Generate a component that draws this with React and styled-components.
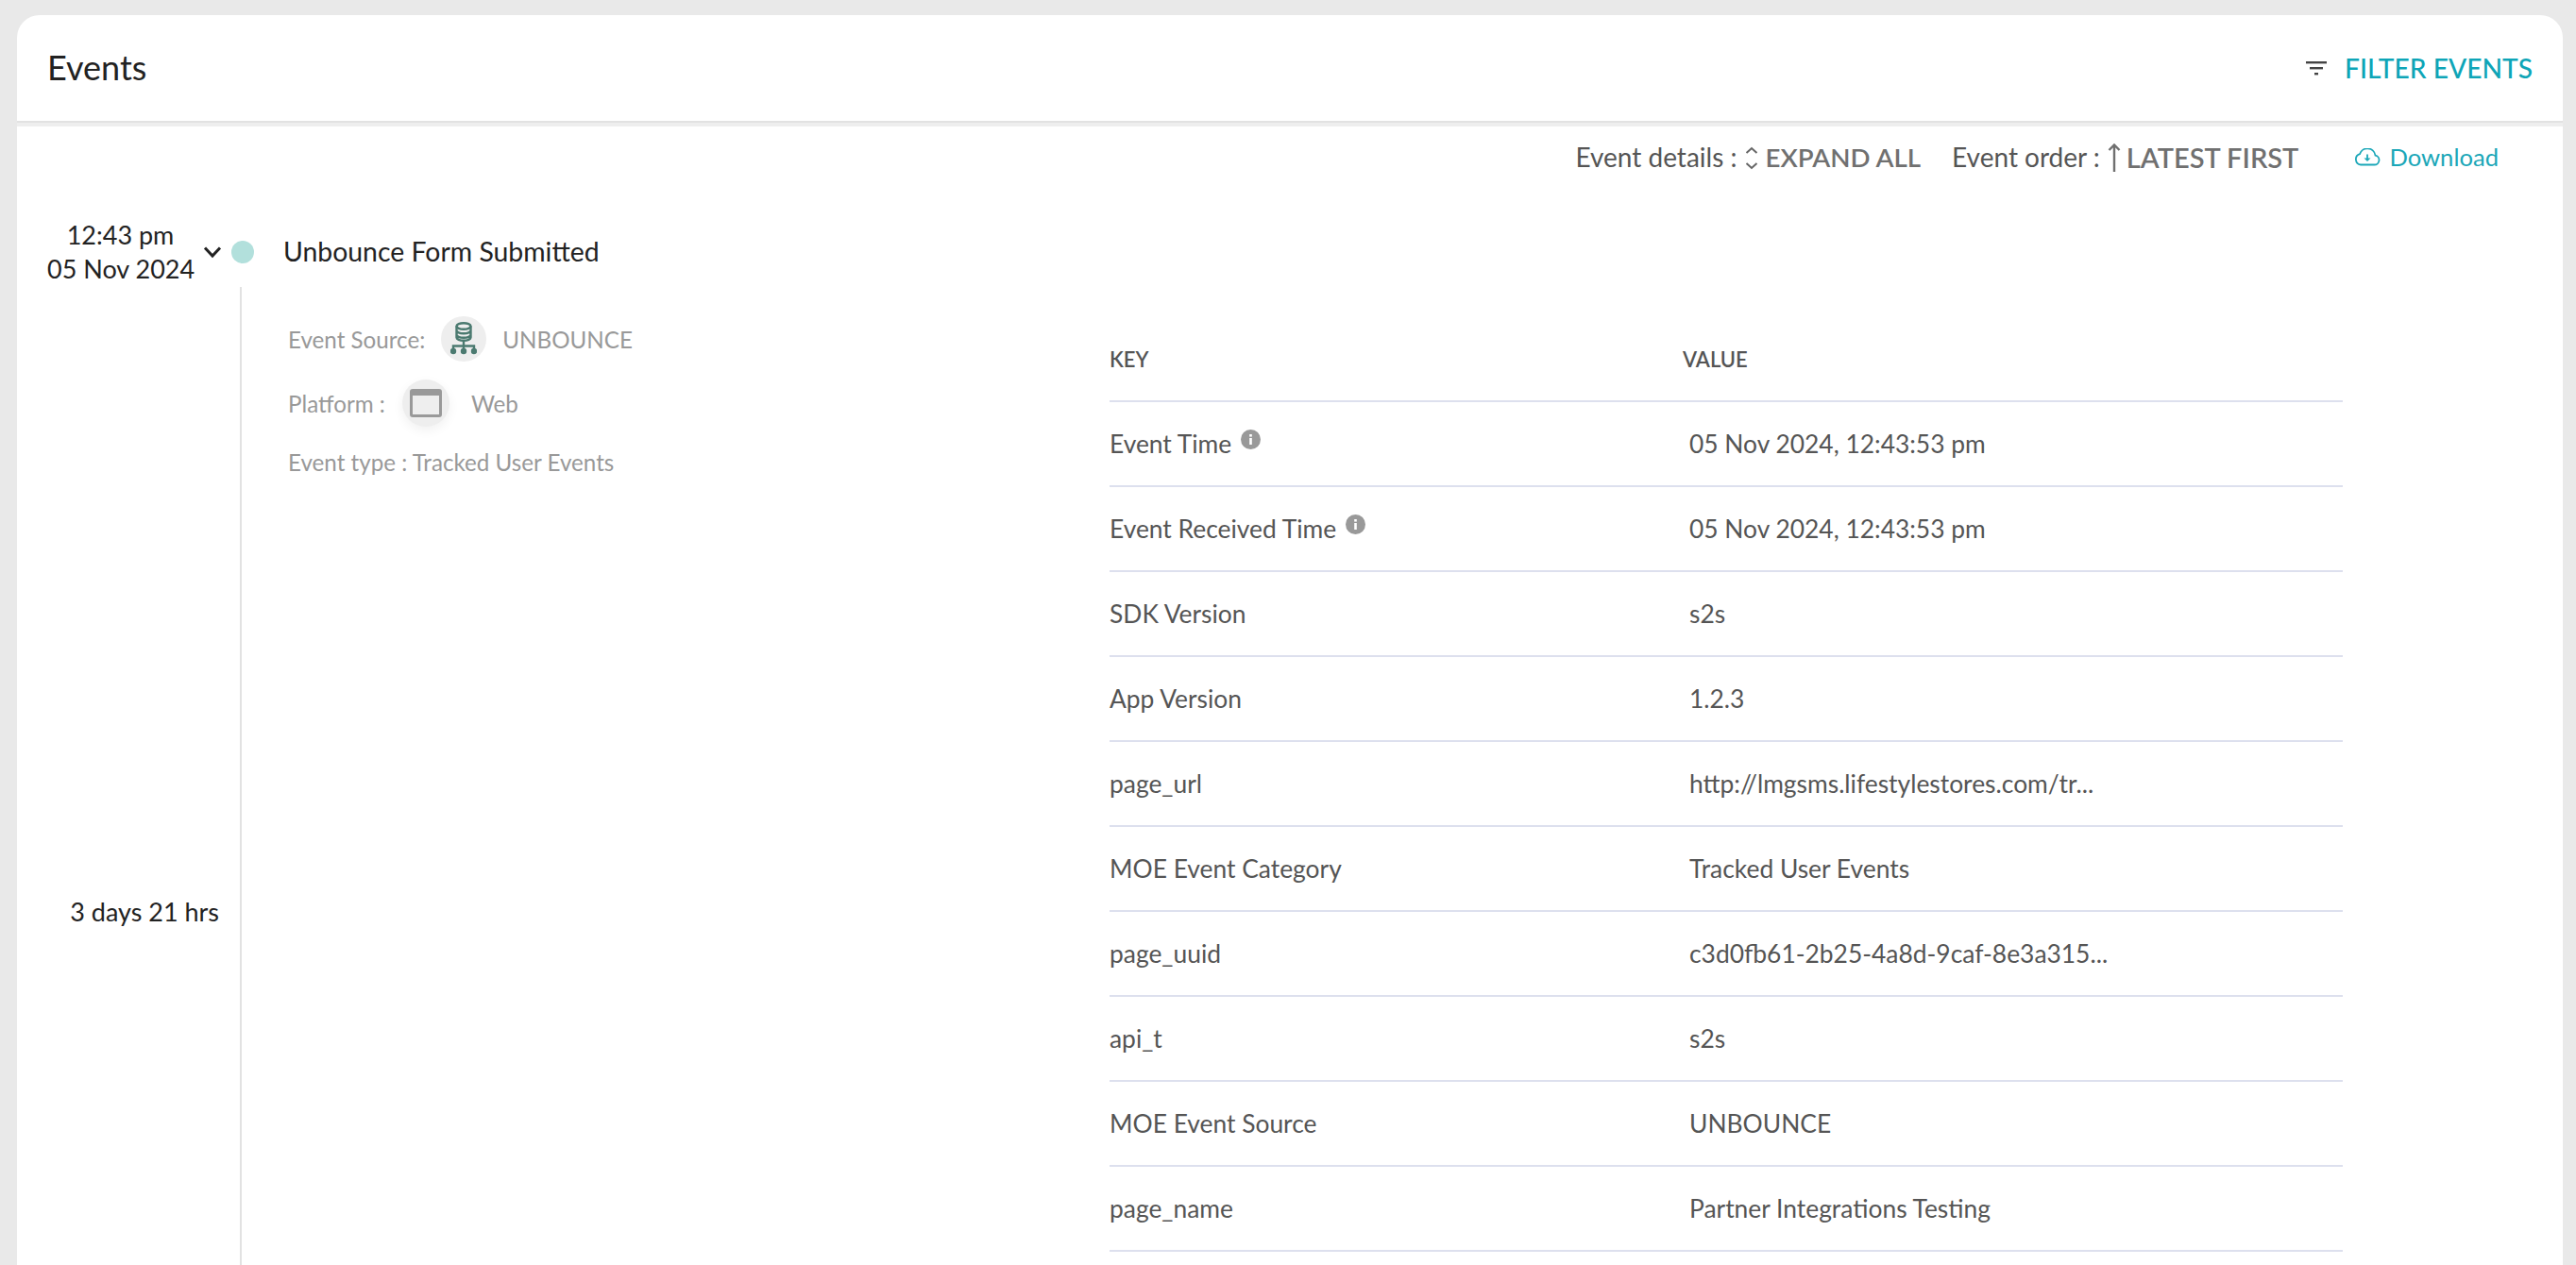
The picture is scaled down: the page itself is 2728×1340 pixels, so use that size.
import React from 'react';
import styled, { createGlobalStyle } from 'styled-components';

const GlobalStyle = createGlobalStyle`
  html, body { margin: 0; padding: 0; background: #e9e9e9; }
  body { font-family: "Lato", "Liberation Sans", sans-serif; }
  #root { height: 1340px; overflow: hidden; }
`;

const Page = styled.div`
  height: 1340px;
  padding: 16px 14px 0 18px;
  box-sizing: border-box;
  overflow: hidden;
`;
const Card = styled.div`
  background: #fff;
  border-radius: 24px 24px 0 0;
  height: 1324px;
  overflow: hidden;
`;
const Header = styled.header`
  height: 114px;
  box-sizing: border-box;
  border-bottom: 2px solid #e2e2e2;
  box-shadow: 0 4px 0 #eeeeee;
  padding: 0 32px;
  display: flex;
  align-items: center;
  justify-content: space-between;
`;
const Title = styled.h1`
  margin: 0;
  padding-bottom: 2px;
  font-size: 36px;
  font-weight: 400;
  color: #222;
`;
const FilterButton = styled.div`
  display: flex;
  align-items: center;
  gap: 18px;
  font-size: 28.200px;
  font-weight: 500;
  color: #0ea5b7;
`;
const Toolbar = styled.div`
  height: 64px;
  margin: 4px 0 33px;
  padding-right: 68px;
  display: flex;
  align-items: center;
  justify-content: flex-end;
  font-size: 28px;
  color: #555;
`;
const ToolGroup = styled.div`
  display: flex;
  align-items: center;
  margin-right: ${p => p.$gap}px;
`;
const ToolValue = styled.span`
  color: #707070;
  font-size: ${p => p.$size}px;
  font-weight: 600;
  margin-left: 6px;
`;
const Download = styled.div`
  display: flex;
  align-items: center;
  gap: 9px;
  color: #1ba7b8;
  font-size: 25.600px;
`;
const EventRow = styled.div`
  display: flex;
  align-items: center;
  height: 72px;
`;
const TimeCol = styled.div`
  width: 155px;
  margin-left: 32px;
  text-align: center;
  font-size: 27px;
  line-height: 36px;
  color: #222;
  white-space: nowrap;
`;
const Chevron = styled.div`
  width: 24px;
  margin-left: 8px;
  display: flex;
  justify-content: center;
`;
const Dot = styled.span`
  width: 24px;
  height: 24px;
  margin-left: 8px;
  border-radius: 50%;
  background: #b2e0dc;
`;
const EventName = styled.div`
  margin-left: 31px;
  padding-bottom: 2px;
  font-size: 28.400px;
  color: #222;
`;
const Body = styled.div`
  display: flex;
  height: 1100px;
`;
const GapCol = styled.div`
  width: 238px;
  box-sizing: border-box;
  border-right: 2px solid #e2e2e2;
  padding: 644px 22px 0 0;
  margin-top: 1px;
  text-align: right;
  font-size: 27px;
  line-height: 36px;
  color: #222;
`;
const Details = styled.div`
  width: 919px;
  box-sizing: border-box;
  padding: 32px 0 0 49px;
  font-size: 24.200px;
  color: #999;
`;
const DetailRow = styled.div`
  display: flex;
  align-items: center;
  margin-top: ${p => p.$top || 0}px;
`;
const IconCircle = styled.span`
  width: ${p => p.$size}px;
  height: ${p => p.$size}px;
  margin: 0 ${p => p.$right}px 0 ${p => p.$left}px;
  flex: none;
  border-radius: 50%;
  background: #eeeeee;
  display: flex;
  align-items: center;
  justify-content: center;
  box-shadow: ${p => (p.$shadow ? '0 4px 12px rgba(0,0,0,.06)' : 'none')};
`;
const Table = styled.div`
  width: 1306px;
  margin-top: 33px;
  display: flex;
  flex-direction: column;
`;
const Row = styled.div`
  height: 90px;
  box-sizing: border-box;
  border-bottom: 2px solid #dde0ee;
  display: grid;
  grid-template-columns: 607px 1fr;
  align-items: center;
`;
const HeadCell = styled.div`
  font-size: 22px;
  font-weight: 600;
  color: #555;
`;
const KeyCell = styled.div`
  display: flex;
  align-items: flex-start;
  gap: 10px;
  font-size: 26.400px;
  color: #555;
`;
const ValueCell = styled.div`
  padding-left: 7px;
  font-size: 26.400px;
  color: #555;
`;
const InfoIcon = styled.svg`
  width: 21px;
  height: 21px;
  margin-top: 1px;
`;

const Info = () => (
  <InfoIcon viewBox="0 0 21 21">
    <circle cx="10.5" cy="10.5" r="10.5" fill="#999" />
    <rect x="9.2" y="9" width="2.6" height="7" fill="#fff" />
    <rect x="9.2" y="5" width="2.6" height="2.6" fill="#fff" />
  </InfoIcon>
);

const rows = [
  ['Event Time', '05 Nov 2024, 12:43:53 pm', true],
  ['Event Received Time', '05 Nov 2024, 12:43:53 pm', true],
  ['SDK Version', 's2s'],
  ['App Version', '1.2.3'],
  ['page_url', 'http://lmgsms.lifestylestores.com/tr...'],
  ['MOE Event Category', 'Tracked User Events'],
  ['page_uuid', 'c3d0fb61-2b25-4a8d-9caf-8e3a315...'],
  ['api_t', 's2s'],
  ['MOE Event Source', 'UNBOUNCE'],
  ['page_name', 'Partner Integrations Testing'],
];

export default function App() {
  return (
    <>
      <GlobalStyle />
      <Page>
        <Card>
          <Header>
            <Title>Events</Title>
            <FilterButton>
              <svg width="24" height="24" viewBox="0 0 24 24" fill="#444">
                <rect x="1" y="5" width="22" height="2.4" />
                <rect x="5" y="11" width="14" height="2.4" />
                <rect x="10" y="17" width="4" height="2.4" />
              </svg>
              FILTER EVENTS
            </FilterButton>
          </Header>
          <Toolbar>
            <ToolGroup $gap={33}>
              Event details :
              <svg width="16" height="34" viewBox="0 0 16 34" fill="none" stroke="#666" strokeWidth="2" style={{ marginLeft: 8 }}>
                <path d="M2.500 13 8 8l5.500 5M2.500 24 8 29l5.500-5" />
              </svg>
              <ToolValue $size={27.7}>EXPAND ALL</ToolValue>
            </ToolGroup>
            <ToolGroup $gap={59}>
              Event order :
              <svg width="14" height="34" viewBox="0 0 14 34" fill="none" stroke="#707070" strokeWidth="2.400" style={{ marginLeft: 8 }}>
                <path d="M7 33V5M1.500 10 7 4.500 12.500 10" />
              </svg>
              <ToolValue $size={29}>LATEST FIRST</ToolValue>
            </ToolGroup>
            <Download>
              <svg width="28" height="19" viewBox="0 0 28 19" fill="none" stroke="#1ba7b8" strokeWidth="1.800">
                <path d="M7 17.500H21.500a5 5 0 0 0 1-9.900A8.500 8.500 0 0 0 6 6.200 5.800 5.800 0 0 0 7 17.500Z" />
                <path d="M14 6.500V11" />
                <path d="M10.500 10.500h7L14 14Z" fill="#1ba7b8" stroke="none" />
              </svg>
              Download
            </Download>
          </Toolbar>
          <EventRow>
            <TimeCol>12:43 pm<br />05 Nov 2024</TimeCol>
            <Chevron>
              <svg width="20" height="14" viewBox="0 0 20 14" fill="none" stroke="#222" strokeWidth="3">
                <path d="M2 2.500 10 11l8-8.500" />
              </svg>
            </Chevron>
            <Dot />
            <EventName>Unbounce Form Submitted</EventName>
          </EventRow>
          <Body>
            <GapCol>3 days 21 hrs</GapCol>
            <Details>
              <DetailRow>
                Event Source:
                <IconCircle $size={48} $left={17} $right={17}>
                  <svg width="28" height="36" viewBox="0 0 28 36" fill="none" stroke="#4b7a70" strokeWidth="2.400">
                    <ellipse cx="14" cy="4.500" rx="7.500" ry="3.300" />
                    <path d="M6.500 4.500v12c0 1.800 3.300 3.300 7.500 3.300s7.500-1.500 7.500-3.300v-12M6.500 9c0 1.800 3.300 3.300 7.500 3.300s7.500-1.500 7.500-3.300M6.500 13.500c0 1.800 3.300 3.300 7.500 3.300s7.500-1.500 7.500-3.300" />
                    <path d="M14 19.500V31M3 31v-5.500h22V31" />
                    <circle cx="3" cy="31" r="3.200" fill="#4b7a70" stroke="none" />
                    <circle cx="14" cy="31" r="3.200" fill="#4b7a70" stroke="none" />
                    <circle cx="25" cy="31" r="3.200" fill="#4b7a70" stroke="none" />
                  </svg>
                </IconCircle>
                UNBOUNCE
              </DetailRow>
              <DetailRow $top={19}>
                Platform :
                <IconCircle $size={50} $left={18} $right={23} $shadow>
                  <svg width="34" height="30" viewBox="0 0 34 30">
                    <rect x="0" y="0" width="34" height="30" rx="3" fill="#999" />
                    <rect x="3" y="7" width="28" height="20" fill="#eee" />
                  </svg>
                </IconCircle>
                Web
              </DetailRow>
              <DetailRow $top={23}>Event type : Tracked User Events</DetailRow>
            </Details>
            <Table>
              <Row>
                <HeadCell>KEY</HeadCell>
                <HeadCell>VALUE</HeadCell>
              </Row>
              {rows.map(([k, v, info]) => (
                <Row key={k}>
                  <KeyCell>{k}{info && <Info />}</KeyCell>
                  <ValueCell>{v}</ValueCell>
                </Row>
              ))}
            </Table>
          </Body>
        </Card>
      </Page>
    </>
  );
}
